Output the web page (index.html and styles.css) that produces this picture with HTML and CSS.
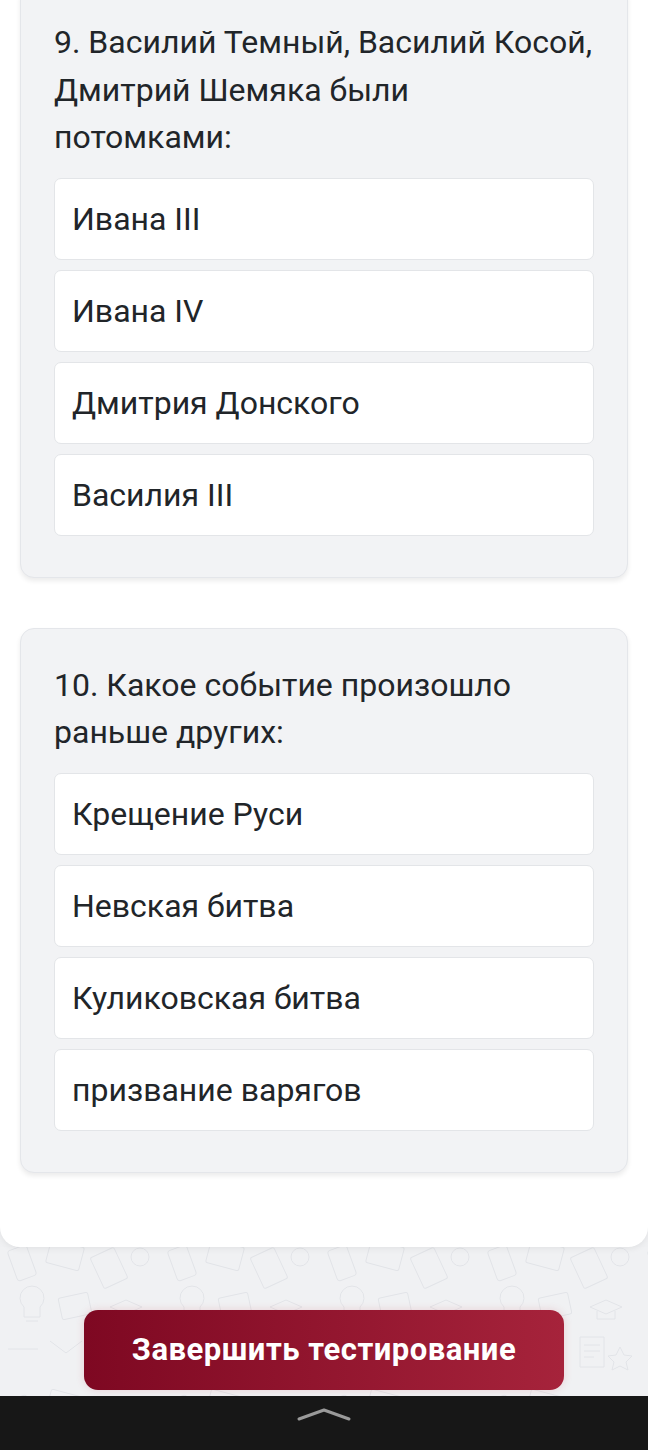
FILE: index.html
```html
<!DOCTYPE html>
<html lang="ru">
<head>
  <meta charset="UTF-8" />
  <meta name="viewport" content="width=device-width, initial-scale=1" />
  <title>Тестирование</title>
  <link rel="stylesheet" href="styles.css">
</head>
<body>
  <div class="sheet">
    <div class="question">
      <p class="question-text">9. Василий Темный, Василий Косой, Дмитрий Шемяка были потомками:</p>
      <div class="answers">
        <div class="answer">Ивана III</div>
        <div class="answer">Ивана IV</div>
        <div class="answer">Дмитрия Донского</div>
        <div class="answer">Василия III</div>
      </div>
    </div>

    <div class="question">
      <p class="question-text">10. Какое событие произошло раньше других:</p>
      <div class="answers">
        <div class="answer">Крещение Руси</div>
        <div class="answer">Невская битва</div>
        <div class="answer">Куликовская битва</div>
        <div class="answer">призвание варягов</div>
      </div>
    </div>
  </div>

  <div class="footer">
    <button class="finish">Завершить тестирование</button>
  </div>

  <div class="navbar">
    <svg width="54" height="16" viewBox="0 0 54 16">
      <polyline points="2,13 27,4 52,13" fill="none" stroke="#9a9a9a" stroke-width="3" stroke-linecap="round" stroke-linejoin="round" />
    </svg>
  </div>
</body>
</html>
```

FILE: styles.css
```css
body {
  margin: 0;
  background: #eff0f2;
  font-family: Roboto, "Liberation Sans", sans-serif;
  color: #212529;
  overflow: hidden;
}

.sheet {
  background: #fff;
  margin-top: -15px;
  padding: 0 20px 74px;
  border-radius: 0 0 20px 20px;
  box-shadow: 0 2px 6px rgba(0, 0, 0, 0.06);
  display: flex;
  flex-direction: column;
  gap: 50px;
  position: relative;
  z-index: 1;
}

.question {
  background: #f2f3f5;
  border: 1px solid #e4e6ea;
  border-radius: 14px;
  padding: 33px 33px 41px;
  box-shadow: 0 3px 5px rgba(0, 0, 0, 0.08);
}

.question-text {
  margin: 0 0 16px;
  max-width: 538.5px;
  font-size: 32px;
  line-height: 47.5px;
  font-weight: 400;
  color: #212529;
}

.answers {
  display: flex;
  flex-direction: column;
  gap: 10px;
}

.answer {
  background: #fff;
  border: 1.5px solid #e3e5e8;
  border-radius: 7px;
  height: 82px;
  box-sizing: border-box;
  padding: 0 17px;
  display: flex;
  align-items: center;
  font-size: 32px;
  color: #212529;
}

.footer {
  height: 150px;
  display: flex;
  justify-content: center;
  padding-top: 63px;
  box-sizing: border-box;
  background-color: #f0f1f3;
  background-image: url("data:image/svg+xml,%3Csvg xmlns='http://www.w3.org/2000/svg' width='160' height='150' viewBox='0 0 160 150'%3E%3Cg fill='none' stroke='%23e2e4e8' stroke-width='1'%3E%3Crect x='12' y='10' width='20' height='32' rx='3' transform='rotate(-20 22 26)'/%3E%3Crect x='48' y='6' width='34' height='24' rx='2' transform='rotate(15 65 18)'/%3E%3Crect x='96' y='14' width='26' height='34' rx='2' transform='rotate(-25 109 31)'/%3E%3Ccircle cx='140' cy='20' r='9'/%3E%3Cpath d='M24 70 a12 12 0 1 1 16 0 v10 h-16 z M26 84 h12'/%3E%3Crect x='60' y='58' width='30' height='22' rx='2' transform='rotate(-12 75 69)'/%3E%3Cpath d='M110 70 l16 -7 l16 7 l-16 7 z M117 74 v8 h18 v-8'/%3E%3Cpath d='M8 112 h30 M50 104 l16 12 l16 -12 M100 100 h24 v30 h-24 z M104 108 h16 M104 114 h16 M104 120 h10'/%3E%3Cpath d='M140 110 l4 8 l8 1 l-6 6 l2 8 l-8 -4 l-8 4 l2 -8 l-6 -6 l8 -1 z'/%3E%3C/g%3E%3C/svg%3E");
  background-size: 160px 150px;
  background-position: 0 -10px;
}

.finish {
  width: 480px;
  height: 80px;
  border: none;
  border-radius: 14px;
  background: linear-gradient(90deg, #7e0822, #a6233b);
  color: #fff;
  font-family: Roboto, "Liberation Sans", sans-serif;
  font-size: 31px;
  letter-spacing: 0.5px;
  font-weight: 700;
  box-shadow: 0 0 8px rgba(200, 60, 80, 0.18);
  cursor: pointer;
}

.navbar {
  position: fixed;
  left: 0;
  right: 0;
  bottom: 0;
  height: 54px;
  background: #171717;
  display: flex;
  justify-content: center;
  padding-top: 10px;
  box-sizing: border-box;
}
```
